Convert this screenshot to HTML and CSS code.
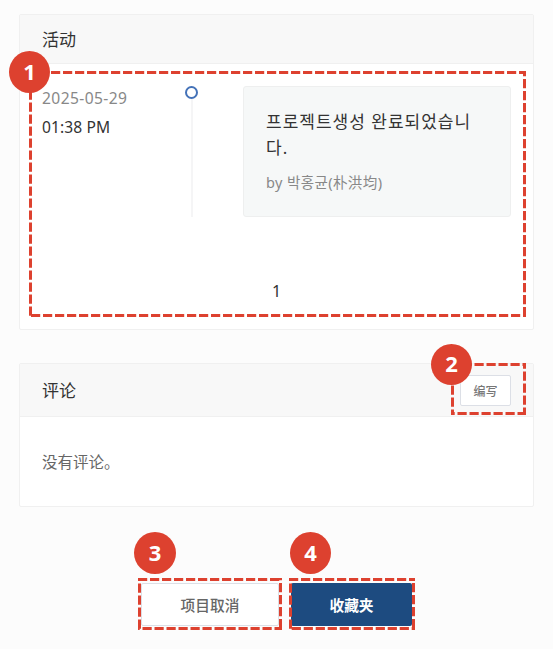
FILE: index.html
```html
<!DOCTYPE html>
<html lang="zh-CN">
<head>
<meta charset="utf-8">
<title>活动</title>
<link rel="stylesheet" href="styles.css">
</head>
<body>
<main class="page">
  <section class="card activity">
    <header class="card-header"><h2>活动</h2></header>
    <div class="timeline">
      <div class="when">
        <div class="date">2025-05-29</div>
        <div class="time">01:38 PM</div>
      </div>
      <div class="rail"><span class="dot"></span></div>
      <article class="event">
        <p class="message" lang="ko">프로젝트생성 완료되었습니<br>다.</p>
        <p class="author" lang="ko">by 박홍균(朴洪均)</p>
      </article>
    </div>
    <nav class="pager">1</nav>
  </section>

  <section class="card comments">
    <header class="card-header">
      <h2>评论</h2>
      <button class="write" type="button">编写</button>
    </header>
    <p class="empty">没有评论。</p>
  </section>

  <div class="actions">
    <button class="action cancel" type="button">项目取消</button>
    <button class="action favorite" type="button">收藏夹</button>
  </div>

  <svg class="guides" width="553" height="649" viewBox="0 0 553 649" aria-hidden="true">
    <path d="M29 72.5H526" stroke-dashoffset="2"/>
    <path d="M524.5 71V317" stroke-dashoffset="4"/>
    <path d="M31 315.5H526"/>
    <path d="M30.5 71V317" stroke-dashoffset="4.5"/>
    <path d="M451 364.5H526" stroke-dashoffset="0.5"/>
    <path d="M524.5 363V415" stroke-dashoffset="3.5"/>
    <path d="M452 413.5H526" stroke-dashoffset="6.5"/>
    <path d="M452.5 363V415" stroke-dashoffset="1.5"/>
    <path d="M138 579.5H282"/>
    <path d="M280.5 578V630" stroke-dashoffset="7"/>
    <path d="M138 628.5H282" stroke-dashoffset="7.5"/>
    <path d="M139.5 578V630" stroke-dashoffset="6.5"/>
    <path d="M289 579.5H415"/>
    <path d="M413.5 578V630" stroke-dashoffset="7"/>
    <path d="M289 628.5H415" stroke-dashoffset="9.3"/>
    <path d="M290.5 578V630" stroke-dashoffset="6.5"/>
  </svg>
  <span class="badge badge-1">1</span>
  <span class="badge badge-2">2</span>
  <span class="badge badge-3">3</span>
  <span class="badge badge-4">4</span>
</main>
</body>
</html>
```

FILE: styles.css
```css
* { box-sizing: border-box; }

body {
  margin: 0;
  background: #fcfcfc;
  color: #333;
  font-family: "Noto Sans", "Noto Sans CJK SC", sans-serif;
}

[lang="ko"] { font-family: "Noto Sans", "Noto Sans CJK KR", sans-serif; }

h2, p { margin: 0; font-weight: 400; }

.page {
  position: relative;
  width: 553px;
  height: 649px;
  padding: 14px 19px 0;
  overflow: hidden;
}

.card {
  border: 1px solid #f0f0f0;
  border-radius: 2px;
  background: #fff;
}

.activity { height: 316px; }
.comments { height: 144px; margin-top: 33px; }

.card-header {
  display: flex;
  align-items: center;
  justify-content: space-between;
  height: 49px;
  padding: 1px 22px 0;
  border-bottom: 1px solid #f0f0f0;
  background: #f8f8f8;
}

.comments .card-header { height: 53px; }

h2 { font-size: 17px; line-height: 24px; }

.timeline {
  display: grid;
  grid-template-columns: 143px 13px 268px;
  height: 131px;
  margin: 22px 22px 0;
}

.when { font-size: 15.6px; line-height: 29px; margin-top: -2px; }
.date { color: #888; letter-spacing: 0.4px; }
.time { letter-spacing: 0.1px; }

.rail { position: relative; display: flex; justify-content: center; }
.rail::before { content: ""; width: 2px; background: #f5f5f6; }
.dot {
  position: absolute;
  top: 0;
  left: 0;
  width: 13px;
  height: 13px;
  border: 2px solid #4472b8;
  border-radius: 50%;
  background: #fff;
}

.event {
  margin-left: 45px;
  width: 268px;
  padding: 22px;
  border: 1px solid #eeefef;
  border-radius: 3px;
  background: #f6f8f8;
}
.message { font-size: 17px; line-height: 26px; letter-spacing: 1px; white-space: nowrap; }
.author { margin-top: 11px; font-size: 14.5px; line-height: 20px; letter-spacing: 0.4px; color: #888; white-space: nowrap; }

.pager { margin-top: 62px; text-align: center; font-size: 16px; line-height: 24px; }

.write {
  width: 51px;
  height: 31px;
  padding: 0;
  border: 1px solid #dcdfe6;
  border-radius: 2px;
  background: #fff;
  color: #777;
  font: 500 12px "Noto Sans", "Noto Sans CJK SC", sans-serif;
}

.empty { padding: 33px 22px; font-size: 15.5px; line-height: 24px; color: #666; }

.actions { display: flex; gap: 12px; margin: 76px 0 0 122px; }
.action {
  height: 43px;
  padding: 0;
  border-radius: 2px;
  font: 500 14.7px "Noto Sans", "Noto Sans CJK SC", sans-serif;
}
.cancel { width: 138px; border: 1px solid #dcdfe6; background: #fff; color: #666; }
.favorite { width: 121px; border: 0; background: #1d4b80; color: #fff; font-weight: 700; }

.guides {
  position: absolute;
  inset: 0;
  fill: none;
  stroke: #dd412f;
  stroke-width: 3;
  stroke-dasharray: 9.2 2.8;
  pointer-events: none;
}

.badge {
  position: absolute;
  display: grid;
  place-items: center;
  width: 41px;
  height: 42px;
  border-radius: 50%;
  background: #dd412f;
  color: #fff;
  font: 700 22px/40px "Noto Sans", sans-serif;
  padding-bottom: 2px;
}
.badge-1 { left: 9px; top: 51px; }
.badge-2 { left: 431px; top: 344px; height: 41px; line-height: 39px; }
.badge-3 { left: 134px; top: 532px; width: 42px; }
.badge-4 { left: 290px; top: 532px; }
```
